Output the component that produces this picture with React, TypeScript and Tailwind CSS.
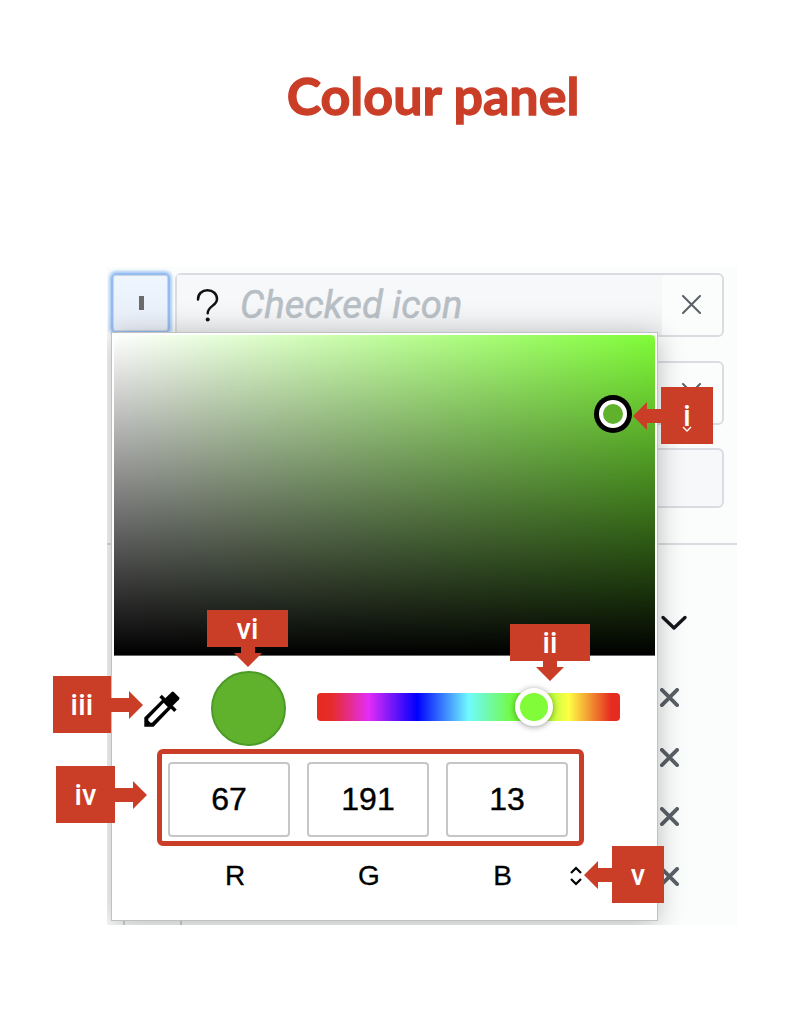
import React from "react";

type Direction = "left" | "right" | "down";

const arrowShapes: Record<Direction, { w: number; h: number; points: string }> = {
  left: { w: 28, h: 28, points: "0,14 14,0 14,7 28,7 28,21 14,21 14,28" },
  right: { w: 32, h: 28, points: "32,14 18,0 18,7 0,7 0,21 18,21 18,28" },
  down: { w: 28, h: 20, points: "14,20 0,6 7,6 7,0 21,0 21,6 28,6" },
};

function Callout({ label, direction, place, box, text = "pt-[2px]" }: {
  label: string;
  direction: Direction;
  place: string;
  box: string;
  text?: string;
}) {
  const arrow = arrowShapes[direction];
  const flow = direction === "down" ? "flex-col" : direction === "left" ? "flex-row-reverse" : "flex-row";
  return (
    <div className={`absolute flex items-center ${flow} ${place}`}>
      <div className={`flex items-center justify-center bg-[#ca3e28] text-[29px] leading-none font-medium tracking-[0.2px] text-white ${box}`}>
        <span className={text}>{label}</span>
      </div>
      <svg width={arrow.w} height={arrow.h} className="shrink-0">
        <polygon points={arrow.points} fill="#ca3e28" />
      </svg>
    </div>
  );
}

function Cross({ size, width, className = "" }: { size: number; width: number; className?: string }) {
  return (
    <svg width={size} height={size} viewBox={`0 0 ${size} ${size}`} className={`shrink-0 ${className}`} fill="none" stroke="#5b6067" strokeWidth={width} strokeLinecap="round">
      <path d={`M${width / 2} ${width / 2}L${size - width / 2} ${size - width / 2}M${size - width / 2} ${width / 2}L${width / 2} ${size - width / 2}`} />
    </svg>
  );
}

function SettingsForm() {
  return (
    <div className="h-full">
      <div className="flex h-[70px] gap-[5px] pt-[6px] pl-[4px]">
        <div className="flex h-[60px] w-[59px] items-center justify-center rounded-[5px] border-2 border-[#94bcf0] bg-gradient-to-b from-[#eef6ff] to-[#e7edf6] pl-[2px] shadow-[0_0_3px_2px_#a9cbf5,inset_0_0_0_1px_#ccd5df]">
          <span className="h-[14px] w-[5px] bg-[#6b6b6b]" />
        </div>
        <div className="flex h-[64px] w-[549px] items-center rounded-[6px] border-2 border-[#dbdce1] bg-[#fbfdfc]">
          <div className="flex h-full w-[485px] items-center bg-gradient-to-b from-[#f7f8fa] from-40% to-[#eeeff1] pl-[19px]">
            <svg width="24" height="34" viewBox="0 0 24 34" fill="none" stroke="#111" strokeWidth="2.5" strokeLinecap="round">
              <path d="M2 11.5C2 5.8 6 2.3 11.5 2.3S21 5.8 21 11C21 18 11.7 17.8 11.7 25.3" />
              <circle cx="11.7" cy="31.5" r="2" fill="#111" stroke="none" />
            </svg>
            <div className="ml-[20px] w-[221px] overflow-hidden text-[38.3px] leading-[52px] whitespace-nowrap text-[#b7bec4] italic [-webkit-text-stroke:0.5px_#b7bec4]">Checked icon</div>
          </div>
          <Cross size={19} width={2} className="mt-[-1px] ml-[20px]" />
        </div>
      </div>
      <div className="mt-[24px] ml-[4px] flex h-[64px] w-[613px] justify-end rounded-[6px] border-2 border-[#dbdce1] pt-[20px] pr-[21px]">
        <Cross size={19} width={2} />
      </div>
      <div className="mt-[23px] ml-[4px] h-[60px] w-[613px] rounded-[6px] border-2 border-[#dbdce1] bg-[#f7f8fa]" />
      <div className="mt-[35px] h-[2px] bg-[#dbdce1]" />
      <div className="mt-[69px] flex flex-col pl-[553px]">
        <svg width="28" height="17" viewBox="0 0 28 17" fill="none" stroke="#15181b" strokeWidth="3.4" strokeLinecap="round" strokeLinejoin="round">
          <path d="M3 3.5L14 14L25 3.5" />
        </svg>
        <div className="mt-[57px] flex flex-col gap-[40.5px]">
          {[0, 1, 2, 3].map((row) => <Cross key={row} size={19} width={3.8} />)}
        </div>
      </div>
      <div className="mt-[33px] ml-[16px] h-[6px] w-[59px] border-x-2 border-[#d0d2d6]" />
    </div>
  );
}

function ColourPicker() {
  return (
    <div className="absolute top-[66px] left-[5px] h-[587px] w-[545px] bg-white p-[2px] shadow-[0_0_0_1px_#bfc1c2,0_4px_26px_rgba(0,0,0,0.28)]">
      <div className="relative h-[321px] rounded-t-[4px] border-b border-[#666] bg-[linear-gradient(to_top,#000,transparent),linear-gradient(to_right,#fff,#80fc38)]">
        <div className="absolute top-[60px] left-[480px] flex size-[38px] items-center justify-center rounded-full bg-black">
          <div className="size-[28px] rounded-full border-[4.5px] border-white bg-[#60b22d]" />
        </div>
      </div>
      <div className="flex h-[93px] items-center pl-[29px]">
        <svg width="38" height="38" viewBox="0 0 38 38" className="mt-[13px]">
          <path d="M21 8L29 17.5L10.5 36.7H1.3V27.5ZM20.7 12.8L5.3 28.8V30.5L7.5 32.7H9L24.8 16.9Z" fillRule="evenodd" />
          <path d="M18.8 7.2L31.2 19.6" stroke="#000" strokeWidth="3.5" strokeLinecap="square" />
          <path d="M22 8.5L28.5 2.2Q29.8 1 31 2.2L36 7.2Q37 8.3 36 9.4L29.5 16Z" />
        </svg>
        <div className="mt-[12px] ml-[30px] size-[75px] rounded-full border-2 border-[#4c9a28] bg-[#60b22d]" />
        <div className="relative mt-[9px] ml-[31px] h-[28px] w-[303px] rounded-[4px] bg-[linear-gradient(to_right,#e62c1d_0%,#e62c2c_5%,#e32df5_17%,#0000fe_33%,#70faff_50%,#72fa3b_65%,#80fc38_72%,#ffff44_83%,#e62c20_97%)]">
          <div className="absolute -top-[5px] left-[198px] size-[38px] rounded-full border-[5px] border-white bg-[#80fc38] shadow-[0_1px_6px_rgba(0,0,0,0.4)]" />
        </div>
      </div>
      <div className="ml-[43px] flex h-[97px] w-[427px] items-center gap-[17px] rounded-[6px] border-5 border-[#ca3e28] pt-[4px] pl-[6px] text-[32px]">
        {["67", "191", "13"].map((value) => (
          <div key={value} className="flex h-[75px] w-[122px] items-center justify-center rounded-[4px] border-2 border-[#c6c6c6] pb-[2px] font-['Liberation_Sans',sans-serif] [-webkit-text-stroke:0.4px_#000]">{value}</div>
        ))}
      </div>
      <div className="mt-[10px] flex h-[40px] items-center font-['Liberation_Sans',sans-serif] text-[28px] [-webkit-text-stroke:0.3px_#000]">
        <span className="ml-[54px] w-[134px] text-center">R</span>
        <span className="w-[134px] text-center">G</span>
        <span className="w-[133px] text-center">B</span>
        <svg width="14" height="20" viewBox="0 0 14 20" fill="none" stroke="#000" strokeWidth="2.2">
          <path d="M2 7L7 2L12 7M2 13L7 18L12 13" />
        </svg>
      </div>
    </div>
  );
}

export default function App() {
  return (
    <main className="relative h-[1024px] w-[790px] overflow-hidden bg-white font-['Roboto',sans-serif] text-black">
      <h1 className="flex h-[267px] items-start justify-center pt-[61px] pl-[76px] font-['Lato',sans-serif] text-[52px] leading-[68px] font-bold whitespace-nowrap text-[#ca3e28] [-webkit-text-stroke:1.3px_#ca3e28]">Colour panel</h1>
      <section className="relative ml-[107px] h-[658px] w-[630px] overflow-hidden bg-[#fbfdfc]">
        <SettingsForm />
        <ColourPicker />
      </section>
      <Callout label="i" direction="left" place="top-[387px] left-[633px]" box="h-[57px] w-[52px]" />
      <svg className="absolute top-[425px] left-[682px]" width="10" height="8" viewBox="0 0 10 8" fill="none" stroke="white" strokeWidth="1.3">
        <path d="M1 2L5 6L9 2" />
      </svg>
      <Callout label="vi" direction="down" place="top-[610px] left-[207px]" box="h-[37px] w-[81px]" />
      <Callout label="ii" direction="down" place="top-[624px] left-[510px]" box="h-[37px] w-[80px]" />
      <Callout label="iii" direction="right" place="top-[676px] left-[53px]" box="h-[57px] w-[58px]" />
      <Callout label="iv" direction="right" place="top-[766px] left-[56px]" box="h-[57px] w-[59px]" />
      <Callout label="v" direction="left" place="top-[846px] left-[584px]" box="h-[57px] w-[52px]" />
    </main>
  );
}
